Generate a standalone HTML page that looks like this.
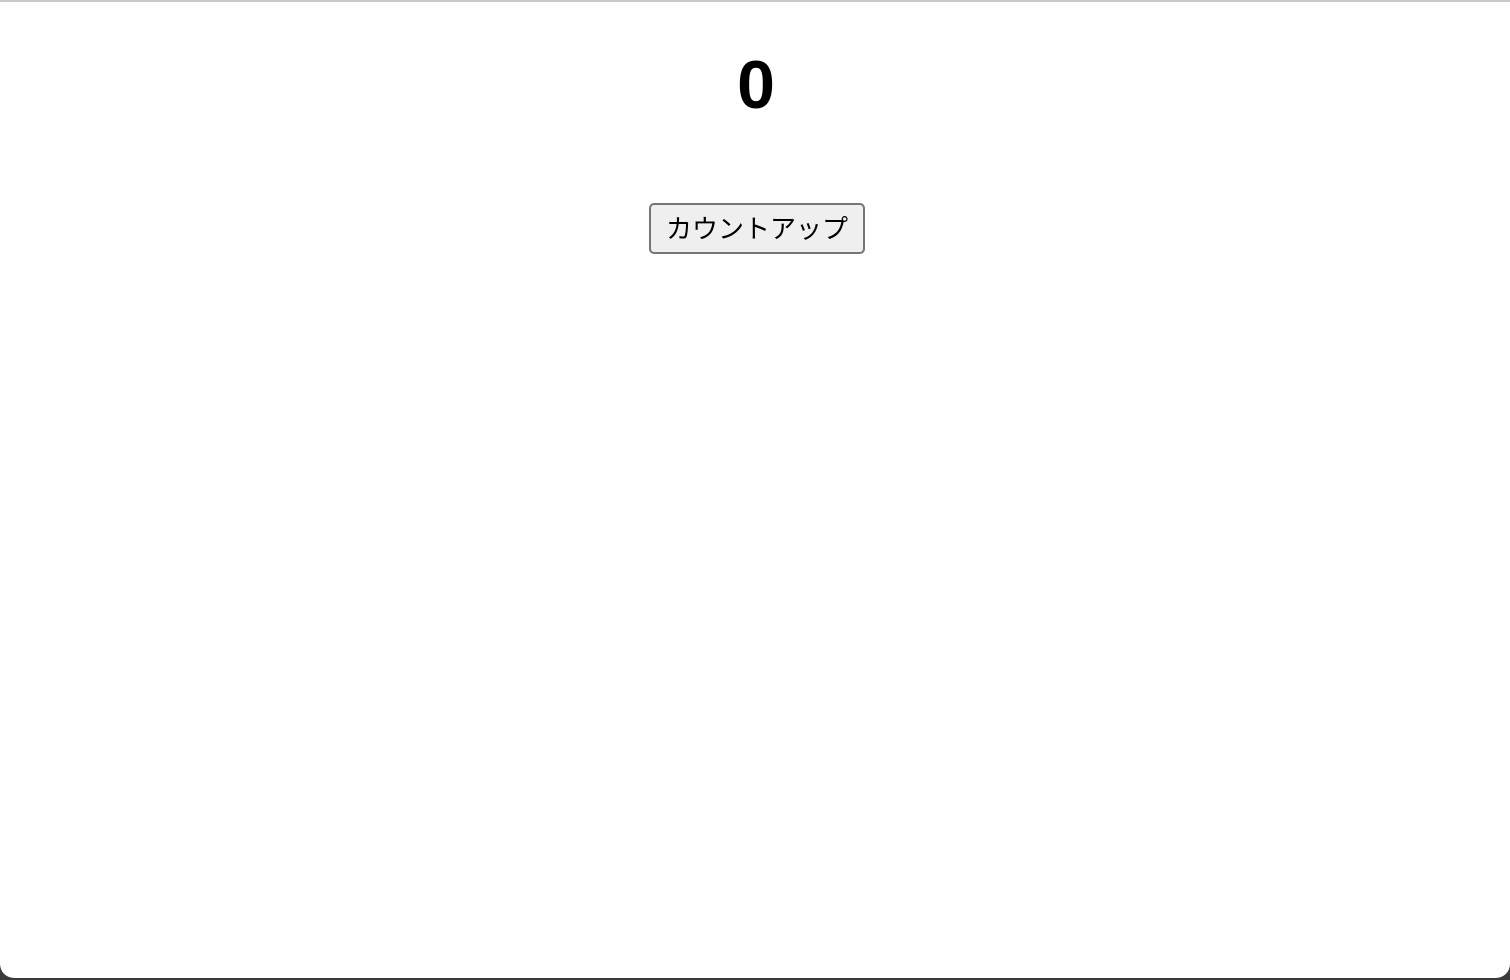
<!DOCTYPE html>
<html><head><meta charset="utf-8"><style>
html,body{margin:0;padding:0;width:1510px;height:980px;overflow:hidden;background:#3a3a3a}
.page{position:absolute;left:0;top:0;width:1510px;height:978px;background:#fefefe;border-top:2px solid #c8c8c8;box-sizing:border-box;border-radius:0 0 14px 14px}
h1{position:absolute;left:0;right:0;top:49px;margin:0;text-align:center;font:bold 68px/1 "Liberation Sans",sans-serif;color:#000;padding-left:2px}
button{position:absolute;left:649px;top:201px;width:216px;height:51px;box-sizing:border-box;background:#efefef;border:2px solid #767676;border-radius:5px;font:26px "Liberation Sans","Noto Sans CJK JP",sans-serif;color:#000;padding:0;line-height:1}
</style></head><body><div class="page"><h1>0</h1><button>カウントアップ</button></div></body></html>
